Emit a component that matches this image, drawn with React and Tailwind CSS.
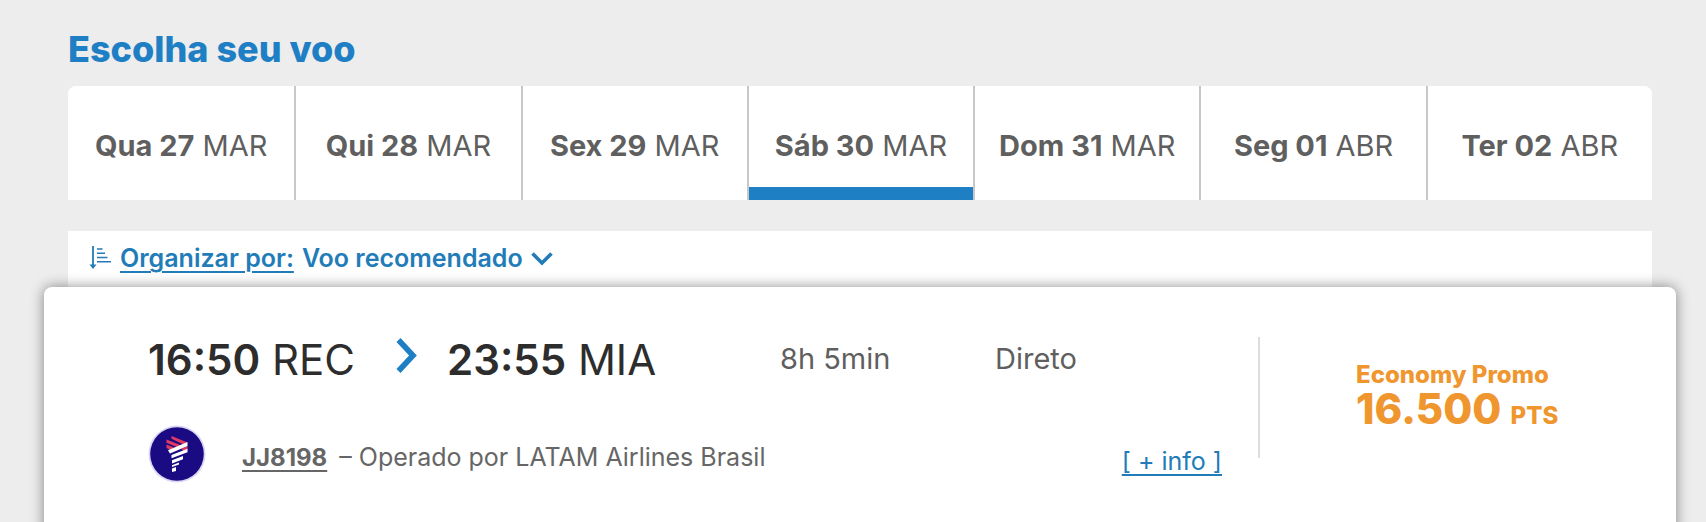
import { useState } from "react";

const dates = [
  { id: "2703", day: "Qua 27", month: "MAR" },
  { id: "2803", day: "Qui 28", month: "MAR" },
  { id: "2903", day: "Sex 29", month: "MAR" },
  { id: "3003", day: "Sáb 30", month: "MAR" },
  { id: "3103", day: "Dom 31", month: "MAR" },
  { id: "0104", day: "Seg 01", month: "ABR" },
  { id: "0204", day: "Ter 02", month: "ABR" },
];

function SortIcon() {
  return (
    <svg width="24" height="28" viewBox="0 0 24 28" fill="none" stroke="currentColor" aria-hidden="true">
      <path d="M5 1V22" strokeWidth="1.8" />
      <path d="M1.500 19.500h7L5 24z" fill="currentColor" stroke="none" />
      <path d="M9 4h5.500M9 8.300h8M9 12.500h10.500M9 16.700h14" strokeWidth="1.600" />
    </svg>
  );
}

function ChevronDown() {
  return (
    <svg width="22" height="14" viewBox="0 0 22 14" fill="none" stroke="currentColor" strokeWidth="3.6" aria-hidden="true">
      <path d="M1.500 1.500L11 11L20.500 1.500" />
    </svg>
  );
}

function ChevronRight() {
  return (
    <svg width="21" height="37" viewBox="0 0 21 37" fill="none" stroke="currentColor" strokeWidth="5.600" aria-hidden="true">
      <path d="M2.500 3L17 18.500L2.500 34" />
    </svg>
  );
}

function AirlineLogo() {
  return (
    <svg width="58" height="58" viewBox="0 0 58 58" role="img" aria-label="LATAM">
      <circle cx="29" cy="29" r="28.500" fill="#dcd6f5" />
      <circle cx="29" cy="29" r="26.800" fill="#1b0b83" />
      <g fill="#e03a63">
        <path d="M23.500 11L39.500 17.500L35.500 19.500L23.500 13.800z" />
        <path d="M18.500 14.500L33.500 20.500L29.500 22.300L18.500 17.800z" />
        <path d="M18.500 19.500L27.500 23.200L23 25.300L18.500 23z" />
        <path d="M33 24L39.500 21V25L36 26z" />
      </g>
      <g fill="#ffffff">
        <path d="M20 25.300L39.500 17V21L22 28.500z" />
        <path d="M23.500 30L39.500 23.800V27.300L23.500 33.300z" />
        <path d="M24 35.200L35 31V34.200L24 38.500z" />
        <path d="M24 40.300L31 37.500V39.500L24 42z" />
        <path d="M24 43.500L28 42V46L24 47z" />
      </g>
    </svg>
  );
}

function DateTabs({ selected, onSelect }) {
  return (
    <nav className="grid grid-cols-7 overflow-hidden rounded-t-lg bg-white" aria-label="Datas">
      {dates.map((date) => (
        <button
          key={date.id}
          type="button"
          aria-pressed={date.id === selected}
          onClick={() => onSelect(date.id)}
          className="flex h-[114px] flex-col border-l-2 border-[#c8c8c8] text-[29px] text-[#5f5f5f] first:border-l-0"
        >
          <span className="w-full pt-10 leading-10 whitespace-nowrap">
            <strong className="font-bold">{date.day}</strong> {date.month}
          </span>
          {date.id === selected && <span className="mt-auto h-[13px] w-full bg-[#1f7fc4]" />}
        </button>
      ))}
    </nav>
  );
}

function SortBar({ sort, onSort }) {
  return (
    <div className="mt-[31px] flex h-14 items-center bg-white pl-5 text-[25px] font-semibold text-[#217cb8]">
      <SortIcon />
      <label htmlFor="sort" className="ml-2 underline decoration-2 underline-offset-4">
        Organizar por:
      </label>
      <select
        id="sort"
        value={sort}
        onChange={(e) => onSort(e.target.value)}
        className="ml-2 appearance-none bg-transparent"
      >
        <option value="recommended">Voo recomendado</option>
      </select>
      <span className="ml-2">
        <ChevronDown />
      </span>
    </div>
  );
}

function FlightCard() {
  return (
    <article className="mr-[30px] ml-11 flex min-h-[260px] rounded-t-lg bg-white pt-[50px] shadow-[0_0_14px_rgba(0,0,0,0.45)]">
      <div className="flex-1 pr-9 pl-[104px]">
        {/* Times */}
        <div className="flex h-11 items-center text-[29px] text-[#5f5f5f]">
          <div className="flex w-[632px] items-center text-[42px] text-[#2d2d2d]">
            <span className="w-[248px] whitespace-nowrap">
              <strong className="font-semibold">16:50</strong> REC
            </span>
            <span className="w-[51px] pb-2 text-[#1f7fc4]">
              <ChevronRight />
            </span>
            <span className="whitespace-nowrap">
              <strong className="font-semibold">23:55</strong> MIA
            </span>
          </div>
          <span className="w-[215px]">8h 5min</span>
          <span>Direto</span>
        </div>

        {/* Operator */}
        <div className="mt-11 flex items-center text-[25px] text-[#666666]">
          <AirlineLogo />
          <a href="#flight" className="ml-9 pt-2 text-2xl font-bold underline decoration-2 underline-offset-4">
            JJ8198
          </a>
          <span className="ml-3 pt-2">– Operado por LATAM Airlines Brasil</span>
          <a href="#info" className="ml-auto pt-4 text-[#217cb8] underline decoration-2 underline-offset-4">
            [ + info ]
          </a>
        </div>
      </div>

      {/* Price */}
      <div className="h-[121px] w-[418px] border-l-2 border-[#dddddd] pt-[22px] pl-24 font-extrabold text-[#f0962f]">
        <p className="text-2xl leading-8">Economy Promo</p>
        <p className="text-[42px] leading-9">
          16.500 <span className="text-2xl">PTS</span>
        </p>
      </div>
    </article>
  );
}

export default function App() {
  const [selected, setSelected] = useState("3003");
  const [sort, setSort] = useState("recommended");

  return (
    <main className="min-h-screen overflow-hidden bg-[#ededed] font-['Inter',sans-serif]">
      <div className="pt-6 pr-[54px] pl-[68px]">
        <h1 className="mb-3 text-4xl leading-[50px] font-extrabold text-[#1f7fc4]">Escolha seu voo</h1>
        <DateTabs selected={selected} onSelect={setSelected} />
        <SortBar sort={sort} onSort={setSort} />
      </div>
      <FlightCard />
    </main>
  );
}
